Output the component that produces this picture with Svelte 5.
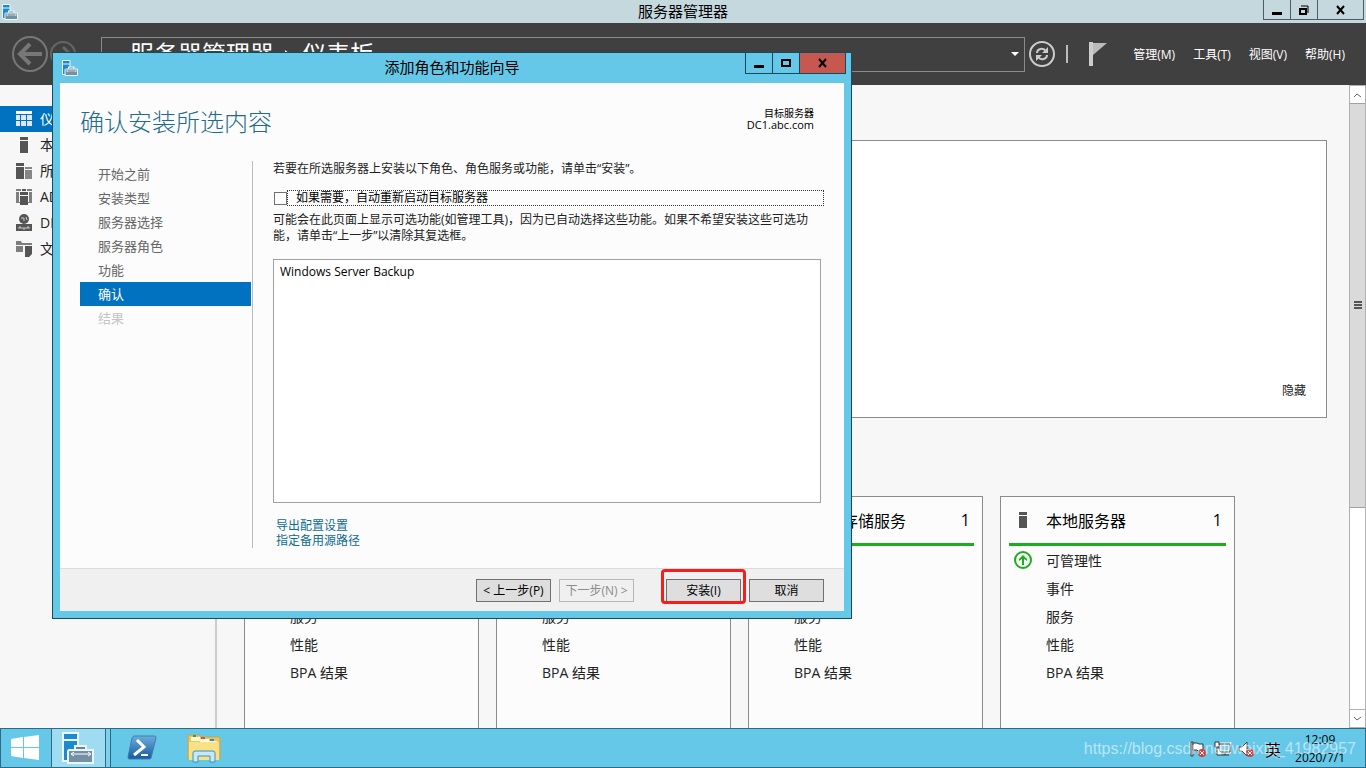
<script>
  // Navigation of the main window
  const navItems = [
    { icon: 'dashboard', label: '仪表板' },
    { icon: 'server', label: '本地服务器' },
    { icon: 'servers', label: '所有服务器' },
    { icon: 'adds', label: 'AD DS' },
    { icon: 'dns', label: 'DNS' },
    { icon: 'files', label: '文件和存储服务' }
  ];

  const menus = ['管理(M)', '工具(T)', '视图(V)', '帮助(H)'];

  // Dashboard tiles
  const tiles = [
    { icon: 'adds', title: 'AD DS' },
    { icon: 'dns', title: 'DNS' },
    { icon: 'files', title: '文件和存储服务' },
    { icon: 'server', title: '本地服务器' }
  ];
  const tileRows = ['可管理性', '事件', '服务', '性能', 'BPA 结果'];

  // Wizard pages
  const steps = ['开始之前', '安装类型', '服务器选择', '服务器角色', '功能', '确认', '结果'];
  const currentStep = 5;

  let activeNav = $state(0);
  let autoRestart = $state(false);
</script>

{#snippet roleIcon(name)}
  <svg class="role-icon" width="18" height="18" viewBox="0 0 18 18" fill="currentColor" aria-hidden="true">
    {#if name === 'dashboard'}
      <path d="M1 1h16v3H1z" />
      <path opacity="0.85" d="M1 5h4v5H1zM6 5h5v5H6zM12 5h5v5h-5zM1 11h4v5H1zM6 11h5v5H6zM12 11h5v5h-5z" />
    {:else if name === 'server'}
      <path d="M5 1h8v3H5zM5 5h8v12H5z" />
    {:else if name === 'servers'}
      <path d="M1 1h8v3H1zM1 5h8v12H1z" />
      <path opacity="0.7" d="M10 5h7v2h-7zM10 8h7v9h-7z" />
    {:else if name === 'adds'}
      <path opacity="0.75" d="M1 1h5v2H1zM12 1h5v2h-5zM1 4h3v10h1v1H1zM14 4h3v11h-4v-1h1z" />
      <path d="M7 1h4v2H7zM5 4h8v3H5zM5 8h8v9H5z" />
    {:else if name === 'dns'}
      <circle cx="9" cy="5" r="5" />
      <path d="M6 4h3v3M11 3l1 3" stroke="#ccc" fill="none" />
      <path d="M1 10h16v7H1z" />
      <path d="M4 15v-2h2v2M8 13v2h2v-2M12 15v-2h2v2" stroke="#ccc" fill="none" />
    {:else}
      <path opacity="0.75" d="M1 1h5l1 2h3v2H1zM1 6h7v6H1zM10 3h7v2h-7z" />
      <path d="M10 6h7v8l-3 3h-4z" />
    {/if}
  </svg>
{/snippet}

{#snippet managerIcon(size)}
  <svg width={size} height={size} viewBox="0 0 32 32" aria-hidden="true">
    <path d="M1 1h15v28H1z" fill="#1e88d0" stroke="#e8f7fd" stroke-width="2" />
    <path d="M1 8h15" stroke="#e8f7fd" stroke-width="2" />
    <path d="M14 18v-3h9v3" fill="none" stroke="#e8f7fd" stroke-width="4" />
    <path d="M15 18v-2h7v2" fill="none" stroke="#6d8296" stroke-width="2" />
    <path d="M6 19l1-1h24v13H6z" fill="#7590a5" stroke="#e8f7fd" stroke-width="2" />
    <path d="M10 22h18M12 20l-3 2 3 2M26 20l3 2-3 2" fill="none" stroke="#fff" />
  </svg>
{/snippet}

<div class="desktop">
  <header class="titlebar">
    <span class="app-icon">{@render managerIcon(16)}</span>
    <span class="title">服务器管理器</span>
    <div class="window-buttons">
      <button aria-label="最小化">
        <svg width="10" height="10"><path d="M0 7h10v3H0z" /></svg>
      </button>
      <button aria-label="还原">
        <svg width="10" height="10"><path d="M1 4h6v5H1z" fill="none" stroke="#000" stroke-width="2" /><path d="M2 1h7v7" fill="none" stroke="#000" /></svg>
      </button>
      <button class="close" aria-label="关闭">
        <svg width="10" height="10"><path d="M1 1l7 8M8 1l-7 8" stroke="#000" stroke-width="2" /></svg>
      </button>
    </div>
  </header>

  <div class="toolbar">
    <button class="tool" aria-label="后退">
      <svg width="38" height="38" viewBox="0 0 38 38" fill="none" stroke="#777">
        <circle cx="19" cy="19" r="17" stroke-width="2" />
        <path d="M31 19H10M19 9L9 19l10 10" stroke-width="4" />
      </svg>
    </button>
    <button class="tool" aria-label="前进">
      <svg width="28" height="28" viewBox="0 0 28 28" fill="none" stroke="#666">
        <circle cx="14" cy="14" r="12" stroke-width="2" />
        <path d="M6 14h14M14 7l7 7-7 7" stroke-width="3" />
      </svg>
    </button>
    <button class="tool history" aria-label="历史记录">
      <svg width="10" height="6"><path d="M0 1h10L5 6z" fill="#777" /></svg>
    </button>
    <div class="address">
      <span>服务器管理器</span>
      <svg width="8" height="8"><path d="M1 0l5 4-5 4z" fill="#fff" /></svg>
      <span>仪表板</span>
      <button class="tool drop" aria-label="展开">
        <svg width="8" height="4"><path d="M0 0h8L4 4z" fill="#fff" /></svg>
      </button>
    </div>
    <button class="tool" aria-label="刷新">
      <svg width="28" height="28" viewBox="0 0 28 28" fill="none" stroke="#ccc">
        <circle cx="14" cy="14" r="12" stroke-width="2" />
        <path d="M9 13c0-4 6-6 9-2M19 15c0 4-6 6-9 2" stroke-width="2" />
        <path d="M20 7v6h-6zM8 21v-6h6z" fill="#ccc" stroke="none" />
      </svg>
    </button>
    <span class="divider"></span>
    <button class="tool flag" aria-label="通知">
      <svg width="18" height="26"><path d="M0 1h4v24H0z" fill="#ccc" /><path d="M4 2h14L4 14z" fill="#bbb" /></svg>
    </button>
    <nav class="menus">
      {#each menus as menu}
        <button class="tool">{menu}</button>
      {/each}
    </nav>
  </div>

  <div class="workspace">
    <nav class="sidebar">
      {#each navItems as item, i}
        <button class="nav-item" class:active={i === activeNav} onclick={() => (activeNav = i)}>
          {@render roleIcon(item.icon)}
          <span>{item.label}</span>
        </button>
      {/each}
    </nav>

    <main class="dashboard">
      <section class="welcome">
        <button class="tool">隐藏</button>
      </section>
      <section class="tiles">
        {#each tiles as tile}
          <article class="tile">
            <header>
              {@render roleIcon(tile.icon)}
              <h2>{tile.title}</h2>
              <span>1</span>
            </header>
            <ul>
              {#each tileRows as row, i}
                <li>
                  {#if i === 0}
                    <svg width="20" height="20" viewBox="0 0 20 20" aria-hidden="true">
                      <circle cx="10" cy="10" r="8" fill="none" stroke="#17b01a" stroke-width="2" />
                      <path d="M10 5l4 4v2l-3-2v6H9V9l-3 2V9z" fill="#17b01a" />
                    </svg>
                  {/if}
                  <span>{row}</span>
                </li>
              {/each}
            </ul>
          </article>
        {/each}
      </section>
    </main>

    <div class="scrollbar">
      <button class="tool" aria-label="向上滚动">
        <svg width="9" height="6"><path d="M1 5l3-3 4 3" fill="none" stroke="#666" /></svg>
      </button>
      <div class="thumb">
        <svg width="8" height="8"><path d="M0 1h8M0 4h8M0 7h8" stroke="#555" stroke-width="2" /></svg>
      </div>
      <div class="track"></div>
      <button class="tool" aria-label="向下滚动">
        <svg width="9" height="6"><path d="M1 1l3 3 4-3" fill="none" stroke="#666" /></svg>
      </button>
    </div>
  </div>

  <footer class="taskbar">
    <button class="task start" aria-label="开始">
      <svg width="28" height="26" viewBox="0 0 28 26" fill="#fff">
        <path d="M0 4l12-2v10H0zM13 2l15-2v12H13zM0 13h12v10L0 21zM13 13h15v12l-15-2z" />
      </svg>
    </button>
    <button class="task running" aria-label="服务器管理器">
      {@render managerIcon(32)}
    </button>
    <button class="task" aria-label="Windows PowerShell">
      <svg width="30" height="26" viewBox="0 0 30 26">
        <defs>
          <linearGradient id="shell" x1="0" y1="0" x2="0" y2="1">
            <stop offset="0" stop-color="#6aaede" />
            <stop offset="1" stop-color="#175a9e" />
          </linearGradient>
        </defs>
        <path d="M7 1h21q1 0 1 2l-5 20q0 1-2 1H2q-1 0-1-2L5 3q1-2 2-2z" fill="url(#shell)" stroke="#427cab" />
        <path d="M10 5l7 7-10 8" fill="none" stroke="#fff" stroke-width="3" />
        <path d="M14 20h7" stroke="#fff" stroke-width="2" />
      </svg>
    </button>
    <button class="task" aria-label="文件资源管理器">
      <svg width="34" height="30" viewBox="0 0 34 30">
        <path d="M1 4q0-2 2-2h9l2 2h18q1 0 1 2v20H1z" fill="#e9c65b" stroke="#c8a548" />
        <path d="M4 4h9v4H4zM13 6h9v4h-9zM21 8h9v4h-9z" fill="#fff9d8" />
        <path d="M6 2h3v2H6z" fill="#3b9b45" />
        <path d="M14 4h4v2h-4z" fill="#d95434" />
        <path d="M23 6h4v2h-4z" fill="#3288c9" />
        <path d="M2 9h30v18H2z" fill="#f8e184" />
        <path d="M6 29V20q0-2 2-2h18q2 0 2 2v9h-5v-6H11v6z" fill="#c5e9fa" stroke="#3f8fc4" />
      </svg>
    </button>

    <div class="tray">
      <svg width="17" height="17" viewBox="0 0 17 17" aria-hidden="true">
        <path d="M1 1h2v14H1z" fill="#fff" stroke="#333" />
        <path d="M3 2h4l2 1h4v7H8L7 9H3z" fill="#fff" stroke="#333" />
        <circle cx="12" cy="12" r="4" fill="#d93b36" />
        <path d="M10 10l4 4M14 10l-4 4" stroke="#fff" stroke-width="1" />
      </svg>
      <svg width="17" height="17" viewBox="0 0 17 17" aria-hidden="true">
        <path d="M5 3h11v8H5z" fill="#80cce8" stroke="#fff" stroke-width="3" />
        <path d="M5 3h11v8H5zM8 14h7M11 11v3" fill="none" stroke="#333" />
        <path d="M1 1h4v5H1zM3 6v8h5" fill="#fff" stroke="#333" />
      </svg>
      <svg width="17" height="17" viewBox="0 0 17 17" aria-hidden="true">
        <path d="M1 6h3l5-5v14l-5-5H1z" fill="#fff" stroke="#444" />
        <circle cx="12" cy="12" r="4" fill="#d93b36" />
        <path d="M10 10l4 4M14 10l-4 4" stroke="#fff" stroke-width="1" />
      </svg>
      <span class="ime">英</span>
      <time>12:09<br />2020/7/1</time>
    </div>
    <span class="watermark">https://blog.csdn.net/weixin_41982957</span>
  </footer>

  <!-- Add roles and features wizard, floats over the main window -->
  <div class="wizard" role="dialog" aria-labelledby="wizard-title">
    <header class="wizard-bar">
      <span class="app-icon">{@render managerIcon(16)}</span>
      <span class="title" id="wizard-title">添加角色和功能向导</span>
      <div class="window-buttons">
        <button aria-label="最小化">
          <svg width="10" height="10"><path d="M0 7h10v3H0z" /></svg>
        </button>
        <button aria-label="最大化">
          <svg width="10" height="10"><path d="M1 2h8v6H1z" fill="none" stroke="#000" stroke-width="2" /></svg>
        </button>
        <button class="close" aria-label="关闭">
          <svg width="10" height="10"><path d="M1 1l7 8M8 1l-7 8" stroke="#000" stroke-width="2" /></svg>
        </button>
      </div>
    </header>

    <div class="wizard-body">
      <div class="wizard-head">
        <h1>确认安装所选内容</h1>
        <p><strong>目标服务器</strong><br />DC1.abc.com</p>
      </div>

      <div class="wizard-main">
        <ol class="steps">
          {#each steps as step, i}
            <li class:current={i === currentStep} class:disabled={i > currentStep}>{step}</li>
          {/each}
        </ol>

        <div class="page">
          <p class="intro">若要在所选服务器上安装以下角色、角色服务或功能，请单击“安装”。</p>
          <div class="restart">
            <input type="checkbox" id="restart" bind:checked={autoRestart} />
            <label for="restart">如果需要，自动重新启动目标服务器</label>
          </div>
          <p class="note">可能会在此页面上显示可选功能(如管理工具)，因为已自动选择这些功能。如果不希望安装这些可选功能，请单击“上一步”以清除其复选框。</p>
          <ul class="selection">
            <li>Windows Server Backup</li>
          </ul>
          <div class="links">
            <a href="#export">导出配置设置</a>
            <a href="#source">指定备用源路径</a>
          </div>
        </div>
      </div>

      <div class="actions">
        <button>&lt; 上一步(P)</button>
        <button disabled>下一步(N) &gt;</button>
        <span class="install">
          <button>安装(I)</button>
        </span>
        <button>取消</button>
      </div>
    </div>
  </div>
</div>

<style>
  :global(body) {
    margin: 0;
  }

  .desktop {
    position: relative;
    display: flex;
    flex-direction: column;
    height: 100vh;
    overflow: hidden;
    font-family: "Open Sans", "Noto Sans CJK SC", sans-serif;
    font-size: 12px;
    color: #222;
    background: #f7f7f7;
  }

  .desktop * {
    box-sizing: border-box;
  }

  svg {
    display: block;
    flex: none;
  }

  button {
    font: inherit;
    color: inherit;
  }

  h1, h2, p, ul, ol {
    margin: 0;
    padding: 0;
    list-style: none;
  }

  .tool {
    display: flex;
    align-items: center;
    justify-content: center;
    padding: 0;
    border: none;
    background: none;
    white-space: nowrap;
  }

  /* Title bars */
  .titlebar,
  .wizard-bar {
    display: grid;
    grid-template-columns: 1fr auto 1fr;
    flex: none;
  }

  .titlebar {
    height: 23px;
    padding: 0 2px;
    background: #c4d8de;
  }

  .wizard-bar {
    height: 30px;
  }

  .app-icon {
    padding-top: 4px;
  }

  .title {
    font-size: 15px;
    line-height: 22px;
    color: #000;
  }

  .window-buttons {
    display: flex;
    justify-self: end;
    height: 20px;
    border: 1px solid #4a5d66;
    border-top: none;
  }

  .window-buttons button {
    display: flex;
    align-items: center;
    justify-content: center;
    width: 27px;
    padding: 0;
    border: none;
    border-right: 1px solid #4a5d66;
    background: none;
  }

  .window-buttons .close {
    width: 45px;
    border-right: none;
  }

  /* Toolbar */
  .toolbar {
    display: flex;
    align-items: center;
    flex: none;
    height: 62px;
    padding: 0 21px 0 11px;
    color: #fff;
    background: #404040;
  }

  .history {
    width: 24px;
  }

  .address {
    display: flex;
    align-items: center;
    flex: 1;
    gap: 10px;
    height: 35px;
    margin-right: 3px;
    padding: 0 5px 0 28px;
    border: 1px solid #8a8a8a;
    font-size: 24px;
    line-height: 32px;
  }

  .drop {
    margin-left: auto;
  }

  .divider {
    width: 2px;
    height: 18px;
    margin: 0 21px 0 10px;
    background: #bbb;
  }

  .menus {
    display: flex;
    gap: 18px;
    margin-left: 26px;
  }

  /* Main area */
  .workspace {
    display: flex;
    flex: 1;
    min-height: 0;
  }

  .sidebar {
    flex: none;
    width: 217px;
    padding-top: 21px;
    border-right: 2px solid #ccc;
  }

  .nav-item {
    display: flex;
    align-items: center;
    gap: 7px;
    width: 100%;
    height: 26px;
    padding: 0 15px;
    border: none;
    background: none;
    font-size: 14px;
    line-height: 20px;
  }

  .nav-item.active {
    color: #fff;
    background: #0072c0;
  }

  .role-icon {
    color: #555;
  }

  .active .role-icon {
    color: #fff;
  }

  .dashboard {
    flex: 1;
    min-width: 0;
    padding: 55px 22px 0 27px;
    overflow: hidden;
  }

  .welcome {
    display: flex;
    align-items: flex-end;
    justify-content: flex-end;
    height: 278px;
    padding: 18px 20px;
    border: 1px solid #8c8c8c;
    background: #fff;
  }

  .tiles {
    display: grid;
    grid-template-columns: repeat(auto-fill, 235px);
    gap: 17px;
    margin-top: 78px;
  }

  .tile {
    height: 260px;
    padding: 0 8px;
    border: 1px solid #8c8c8c;
    background: #fcfcfc;
  }

  .tile header {
    display: flex;
    align-items: center;
    gap: 14px;
    height: 49px;
    padding: 0 4px 0 5px;
    border-bottom: 3px solid #17b01a;
    font-size: 16px;
    color: #000;
  }

  .tile h2 {
    flex: 1;
    font-size: 16px;
    font-weight: 400;
  }

  .tile li {
    display: grid;
    grid-template-columns: 20px 1fr;
    align-items: center;
    gap: 13px;
    height: 28px;
    padding-left: 4px;
    font-size: 14px;
  }

  .tile li span {
    grid-column: 2;
  }

  .scrollbar {
    display: flex;
    flex-direction: column;
    flex: none;
    width: 17px;
    border: 1px solid #b0b0b0;
    background: #fff;
  }

  .scrollbar button {
    height: 17px;
  }

  .thumb {
    display: flex;
    align-items: center;
    justify-content: center;
    flex: 2;
    border: 1px solid #a0a0a0;
    border-width: 1px 0;
    background: #dadada;
  }

  .track {
    flex: 1;
    border-bottom: 1px solid #b0b0b0;
  }

  /* Taskbar */
  .taskbar {
    position: relative;
    display: flex;
    flex: none;
    height: 40px;
    border: 1px solid #2b6c84;
    background: #66c8e8;
  }

  .task {
    display: flex;
    align-items: center;
    justify-content: center;
    width: 62px;
    padding: 0;
    border: none;
    background: none;
  }

  .start {
    width: 50px;
    padding-right: 2px;
  }

  .running {
    width: 60px;
    padding-right: 7px;
    border: 1px solid #2b6c84;
    border-width: 0 1px;
    background: linear-gradient(90deg, #9fdcf1 53px, #2b6c84 53px, #2b6c84 54px, #7fd0eb 54px);
  }

  .tray {
    display: flex;
    align-items: center;
    gap: 7px;
    margin-left: auto;
    padding: 2px 20px 0 0;
    color: #000;
  }

  .ime {
    margin-left: 3px;
    font-size: 16px;
    text-shadow: 0 0 2px #fff;
  }

  time {
    margin-left: 7px;
    line-height: 18px;
    text-align: center;
  }

  .watermark {
    position: absolute;
    right: 9px;
    top: 11px;
    font-family: "Liberation Sans", sans-serif;
    font-size: 16px;
    line-height: 18px;
    color: rgba(255, 255, 255, 0.55);
    pointer-events: none;
  }

  /* Wizard window */
  .wizard {
    position: absolute;
    top: 52px;
    left: 52px;
    display: flex;
    flex-direction: column;
    width: 800px;
    padding: 0 7px 7px;
    border: 1px solid #174a5c;
    background: #66c8e8;
  }

  .wizard .title {
    line-height: 28px;
  }

  .wizard .window-buttons {
    height: 21px;
    margin-right: -2px;
    border-color: #17485a;
  }

  .wizard .window-buttons button {
    border-color: #17485a;
  }

  .wizard .close {
    background: #c75850;
  }

  .wizard-bar .app-icon {
    padding: 7px 0 0 2px;
  }

  .wizard-body {
    background: #fcfcfc;
  }

  .wizard-head {
    display: flex;
    justify-content: space-between;
    height: 78px;
    padding: 20px 30px 0 20px;
  }

  h1 {
    font-size: 24px;
    font-weight: 300;
    line-height: 38px;
    color: #1f6b8c;
  }

  .wizard-head p {
    padding-top: 4px;
    font-size: 11px;
    line-height: 12px;
    text-align: right;
    color: #000;
  }

  .wizard-head strong {
    font-size: 10px;
    font-weight: 400;
  }

  .wizard-main {
    display: flex;
    height: 407px;
    padding: 0 20px 20px;
  }

  .steps {
    flex: none;
    width: 173px;
    padding: 1px 1px 0 0;
    border-right: 1px solid #bbb;
    font-size: 13px;
    line-height: 24px;
    color: #666;
  }

  .steps li {
    padding-left: 18px;
  }

  .steps .current {
    color: #fff;
    background: #0072c0;
  }

  .steps .disabled {
    color: #c4c4c4;
  }

  .page {
    display: flex;
    flex-direction: column;
    flex: 1;
    padding-left: 20px;
    line-height: 16px;
  }

  .restart {
    display: flex;
    align-items: center;
    margin-top: 13px;
    color: #000;
  }

  .restart input {
    appearance: none;
    width: 13px;
    height: 13px;
    margin: 0 0 0 1px;
    border: 1px solid #707070;
    background: #fff;
  }

  .restart input:checked {
    background: #0072c0;
  }

  .restart label {
    flex: 1;
    padding-left: 8px;
    border: 1px dotted #333;
    line-height: 14px;
  }

  .note {
    margin-top: 6px;
  }

  .selection {
    height: 244px;
    margin: 15px 3px 15px 0;
    padding: 4px 6px;
    border: 1px solid #a0a0a0;
    background: #fff;
    color: #000;
  }

  .links {
    display: flex;
    flex-direction: column;
    align-items: flex-start;
    padding-left: 3px;
    line-height: 15px;
  }

  .links a {
    color: #0f6c91;
    text-decoration: none;
  }

  .actions {
    display: flex;
    justify-content: flex-end;
    gap: 8px;
    height: 43px;
    padding: 10px 20px;
    border-top: 1px solid #dcdcdc;
    background: #f0f0f0;
  }

  .actions button {
    width: 75px;
    height: 23px;
    padding: 0;
    border: 1px solid #707070;
    background: #dedede;
    color: #000;
    line-height: 20px;
    white-space: nowrap;
  }

  .actions button:disabled {
    border-color: #b8b8b8;
    background: #f0f0f0;
    color: #8c8c8c;
  }

  .install {
    position: relative;
    margin-left: 24px;
  }

  .install::after {
    content: '';
    position: absolute;
    inset: -10px -5px -3px;
    border: 3px solid #f02020;
    border-radius: 4px;
    pointer-events: none;
  }
</style>
